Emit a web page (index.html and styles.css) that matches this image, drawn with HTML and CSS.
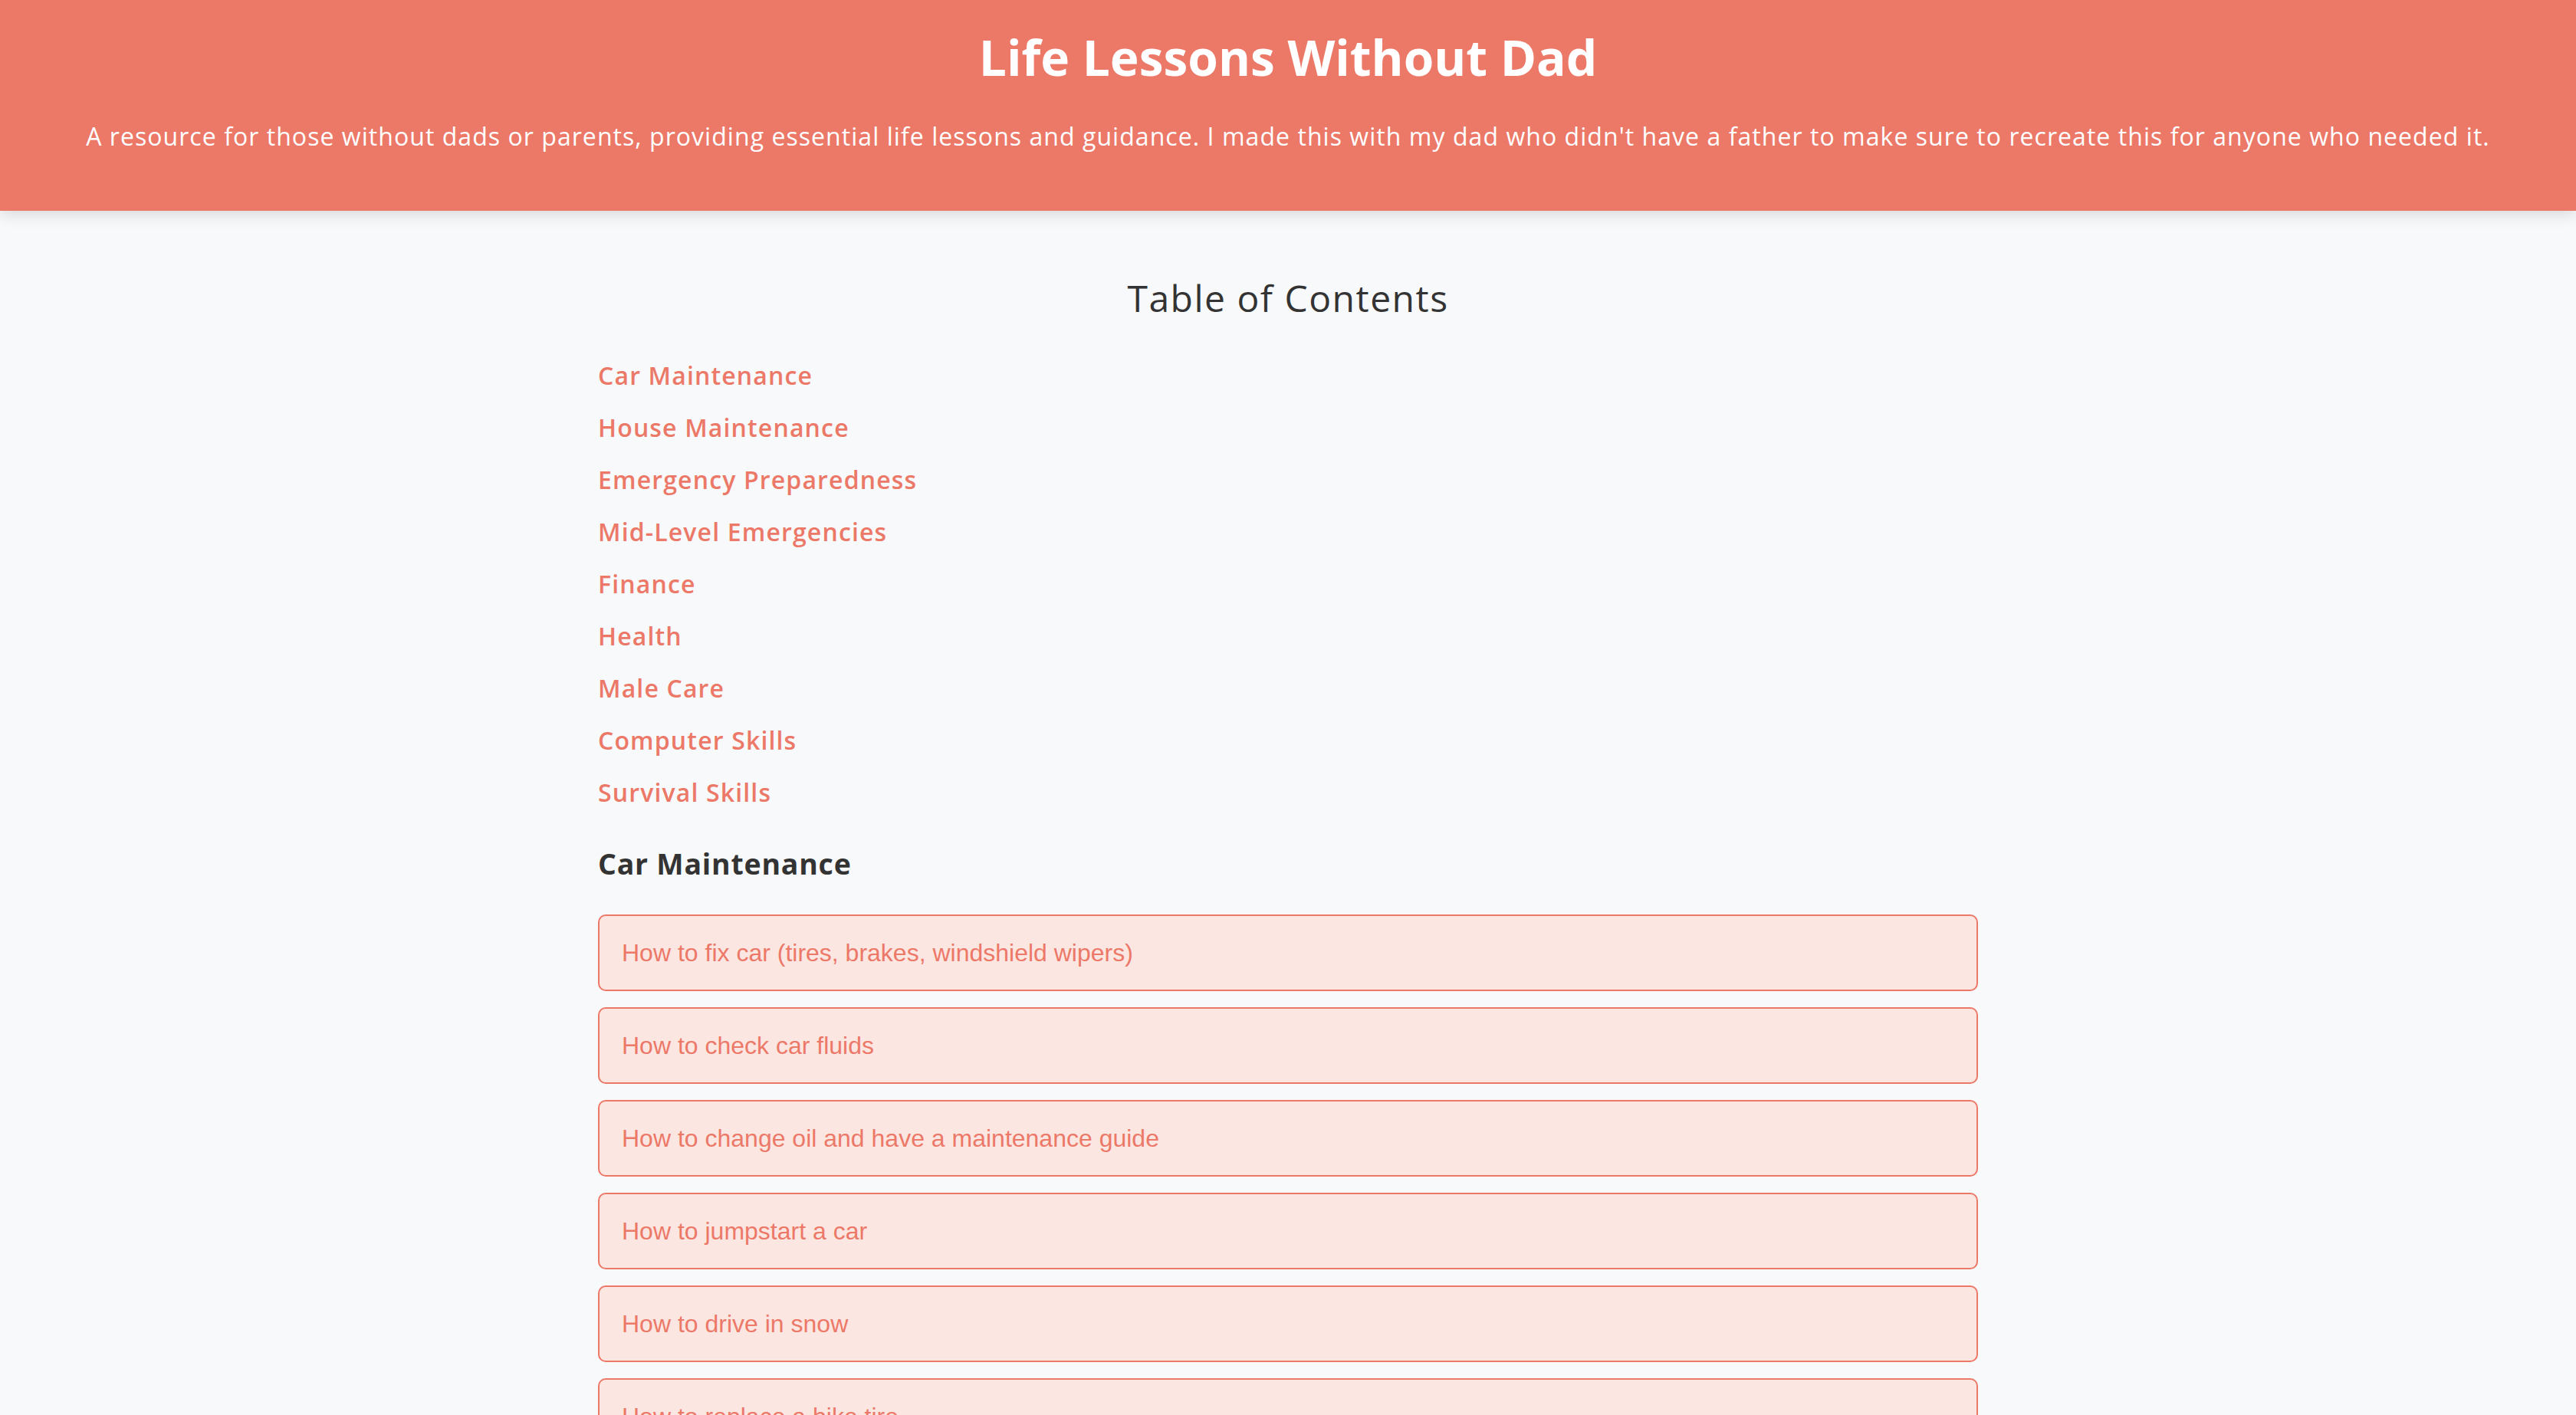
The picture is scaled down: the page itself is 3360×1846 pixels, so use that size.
FILE: index.html
```html
<!DOCTYPE html>
<html lang="en">
<head>
<meta charset="utf-8">
<title>Life Lessons Without Dad</title>
<link rel="stylesheet" href="styles.css">
</head>
<body>
<header class="site-header">
  <h1 class="site-title">Life Lessons Without Dad</h1>
  <p class="site-intro">A resource for those without dads or parents, providing essential life lessons and guidance. I made this with my dad who didn't have a father to make sure to recreate this for anyone who needed it.</p>
</header>
<main class="container">
  <h2 class="toc-title">Table of Contents</h2>
  <ul class="toc-list">
    <li><a class="toc-link" href="#car">Car Maintenance</a></li>
    <li><a class="toc-link" href="#house">House Maintenance</a></li>
    <li><a class="toc-link" href="#emergency">Emergency Preparedness</a></li>
    <li><a class="toc-link" href="#mid">Mid-Level Emergencies</a></li>
    <li><a class="toc-link" href="#finance">Finance</a></li>
    <li><a class="toc-link" href="#health">Health</a></li>
    <li><a class="toc-link" href="#male">Male Care</a></li>
    <li><a class="toc-link" href="#computer">Computer Skills</a></li>
    <li><a class="toc-link" href="#survival">Survival Skills</a></li>
  </ul>
  <section class="section" id="car">
    <h3 class="section-title">Car Maintenance</h3>
    <div class="lessons">
      <button class="lesson">How to fix car (tires, brakes, windshield wipers)</button>
      <button class="lesson">How to check car fluids</button>
      <button class="lesson">How to change oil and have a maintenance guide</button>
      <button class="lesson">How to jumpstart a car</button>
      <button class="lesson">How to drive in snow</button>
      <button class="lesson">How to replace a bike tire</button>
    </div>
  </section>
</main>
</body>
</html>
```
FILE: styles.css
```css
* { box-sizing: border-box; }
html, body { margin: 0; padding: 0; }
body {
  background: #f8f9fa;
  color: #333333;
  font-family: "Open Sans", "Liberation Sans", sans-serif;
  font-size: 32px;
  height: 1846px;
  overflow: hidden;
}
.site-header {
  position: relative;
  z-index: 1;
  background: #ec7868;
  color: #ffffff;
  text-align: center;
  padding: 35px 40px 73px;
  box-shadow: 0 4px 20px rgba(0, 0, 0, 0.14);
}
.site-title {
  margin: 0;
  font-size: 64px;
  font-weight: 700;
  line-height: 80px;
}
.site-intro {
  margin: 39px 0 0;
  font-size: 32px;
  line-height: 48px;
  letter-spacing: 1.05px;
}
.container {
  width: 1800px;
  margin: 0 auto;
}
.toc-title {
  margin: 84px 0 0;
  text-align: center;
  font-size: 48px;
  font-weight: 400;
  line-height: 60px;
  letter-spacing: 1.5px;
}
.toc-list {
  list-style: none;
  margin: 37px 0 0;
  padding: 0;
}
.toc-list li {
  height: 68px;
  line-height: 68px;
}
.toc-link {
  color: #ec7868;
  text-decoration: none;
  font-weight: 600;
  font-size: 32px;
  letter-spacing: 1.15px;
}
.section-title {
  margin: 34px 0 0;
  font-size: 37.44px;
  font-weight: 700;
  line-height: 50px;
  letter-spacing: 0.8px;
}
.lessons {
  display: flex;
  flex-direction: column;
  gap: 21px;
  margin-top: 41px;
}
.lesson {
  display: block;
  width: 100%;
  text-align: left;
  background: #fce6e1;
  color: #ec7868;
  border: 2px solid #ec7868;
  border-radius: 10px;
  padding: 30px 29px 29px;
  font-family: "Liberation Sans", Arial, sans-serif;
  font-size: 32px;
  line-height: 37px;
}
```
